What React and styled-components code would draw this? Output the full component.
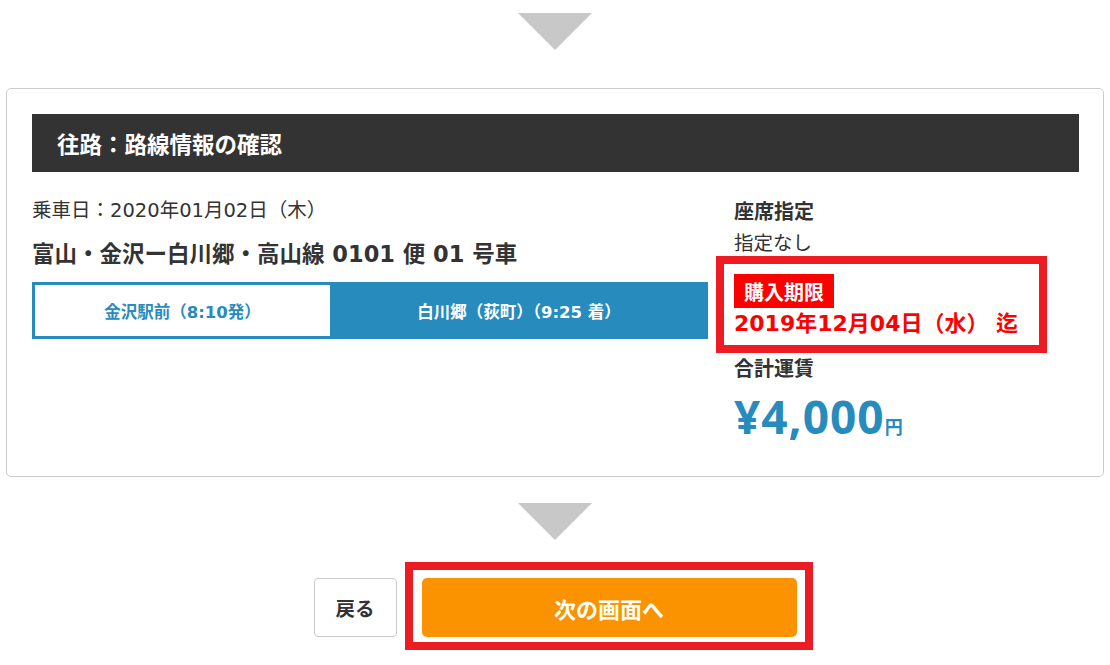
import React from 'react';
import styled, { createGlobalStyle } from 'styled-components';

const GlobalStyle = createGlobalStyle`
  body {
    margin: 0;
    background: #fff;
    font-family: "DejaVu Sans", "Noto Sans CJK JP", sans-serif;
    color: #333;
  }
`;

const Page = styled.div`
  width: 1110px;
  min-height: 665px;
  box-sizing: border-box;
  padding-bottom: 28px;
  display: flex;
  flex-direction: column;
  align-items: center;
`;

// 下向きの三角
const Arrow = styled.div`
  width: 0;
  height: 0;
  margin-top: ${(p) => p.$top}px;
  border-left: 37px solid transparent;
  border-right: 37px solid transparent;
  border-top: 37px solid #c8c8c8;
`;

const Card = styled.section`
  align-self: stretch;
  margin: 38px 6px 0;
  border: 1px solid #cccccc;
  border-radius: 5px;
  padding: 25px 24px 32px 25px;
`;

const CardHeader = styled.h2`
  margin: 0;
  height: 58px;
  padding-left: 25px;
  background: #333333;
  color: #fff;
  font-size: 22.5px;
  font-weight: 700;
  display: flex;
  align-items: center;
`;

const Body = styled.div`
  display: grid;
  grid-template-columns: 676px 1fr;
  column-gap: 26px;
  padding-top: 26px;
`;

const Column = styled.div`
  display: flex;
  flex-direction: column;
  align-items: flex-start;
`;

const DateLine = styled.div`
  font-size: 19.5px;
  line-height: 26px;
`;

const RouteName = styled.div`
  margin-top: 15px;
  font-size: 22.5px;
  font-weight: 700;
  line-height: 30px;
`;

const RouteBar = styled.div`
  align-self: stretch;
  margin-top: 13px;
  height: 57px;
  display: grid;
  grid-template-columns: 298px 1fr;
  background: #288bbd;
`;

const Stop = styled.div`
  display: flex;
  align-items: center;
  justify-content: center;
  font-size: 16.5px;
  font-weight: 700;
  color: ${(p) => (p.$from ? '#288bbd' : '#fff')};
  background: ${(p) => (p.$from ? '#fff' : 'transparent')};
  border: ${(p) => (p.$from ? '3px solid #288bbd' : 'none')};
  border-right: none;
`;

const Label = styled.div`
  margin-top: ${(p) => p.$top || 0}px;
  font-size: 20px;
  font-weight: 700;
  line-height: 28px;
`;

const Value = styled.div`
  margin-top: 3px;
  font-size: 19.5px;
  line-height: 30px;
`;

const Deadline = styled.div`
  position: relative;
  margin-top: 15px;

  &::after {
    content: '';
    position: absolute;
    left: -18px;
    top: -18px;
    width: 331px;
    height: 97px;
    box-sizing: border-box;
    border: 8px solid #ed1c24;
    pointer-events: none;
  }
`;

const Tag = styled.span`
  display: inline-flex;
  align-items: center;
  height: 34px;
  padding: 0 10px;
  background: #ff0000;
  color: #fff;
  font-size: 20px;
  font-weight: 700;
`;

const DeadlineDate = styled.div`
  color: #ff0000;
  font-size: 22px;
  font-weight: 700;
  line-height: 32px;
`;

const Price = styled.div`
  margin-top: 5px;
  color: #288bbd;
  font-size: 46px;
  font-weight: 700;
  line-height: 56px;
  letter-spacing: 1px;
  font-family: "Noto Sans", "Noto Sans CJK JP", sans-serif;

  & small {
    font-size: 18px;
    line-height: 0;
    letter-spacing: 0;
    font-family: "Noto Sans CJK JP", sans-serif;
  }
`;

const Actions = styled.div`
  margin-top: 38px;
  display: flex;
  gap: 25px;
`;

const BackButton = styled.button`
  width: 83px;
  height: 59px;
  border: 1px solid #cccccc;
  border-radius: 4px;
  background: #fff;
  color: #333;
  font-family: "Noto Sans CJK JP", sans-serif;
  font-size: 19.5px;
  font-weight: 700;
  cursor: pointer;
`;

const NextWrap = styled.div`
  position: relative;

  &::after {
    content: '';
    position: absolute;
    left: -17px;
    top: -16px;
    right: -16px;
    bottom: -13px;
    border: 8px solid #ed1c24;
    pointer-events: none;
  }
`;

const NextButton = styled.button`
  width: 375px;
  height: 59px;
  border: none;
  border-radius: 5px;
  background: #fb9300;
  color: #fff;
  font-family: "Noto Sans CJK JP", sans-serif;
  font-size: 22px;
  font-weight: 700;
  cursor: pointer;
`;

const App = () => (
  <>
    <GlobalStyle />
    <Page>
      <Arrow $top={13} />
      <Card>
        <CardHeader>往路：路線情報の確認</CardHeader>
        <Body>
          <Column>
            <DateLine>乗車日：2020年01月02日（木）</DateLine>
            <RouteName>富山・金沢ー白川郷・高山線 0101 便 01 号車</RouteName>
            <RouteBar>
              <Stop $from>金沢駅前（8:10発）</Stop>
              <Stop>白川郷（荻町）（9:25 着）</Stop>
            </RouteBar>
          </Column>
          <Column>
            <Label>座席指定</Label>
            <Value>指定なし</Value>
            <Deadline>
              <Tag>購入期限</Tag>
              <DeadlineDate>2019年12月04日（水） 迄</DeadlineDate>
            </Deadline>
            <Label $top={15}>合計運賃</Label>
            <Price>
              ¥4,000<small>円</small>
            </Price>
          </Column>
        </Body>
      </Card>
      <Arrow $top={26} />
      <Actions>
        <BackButton>戻る</BackButton>
        <NextWrap>
          <NextButton>次の画面へ</NextButton>
        </NextWrap>
      </Actions>
    </Page>
  </>
);

export default App;
